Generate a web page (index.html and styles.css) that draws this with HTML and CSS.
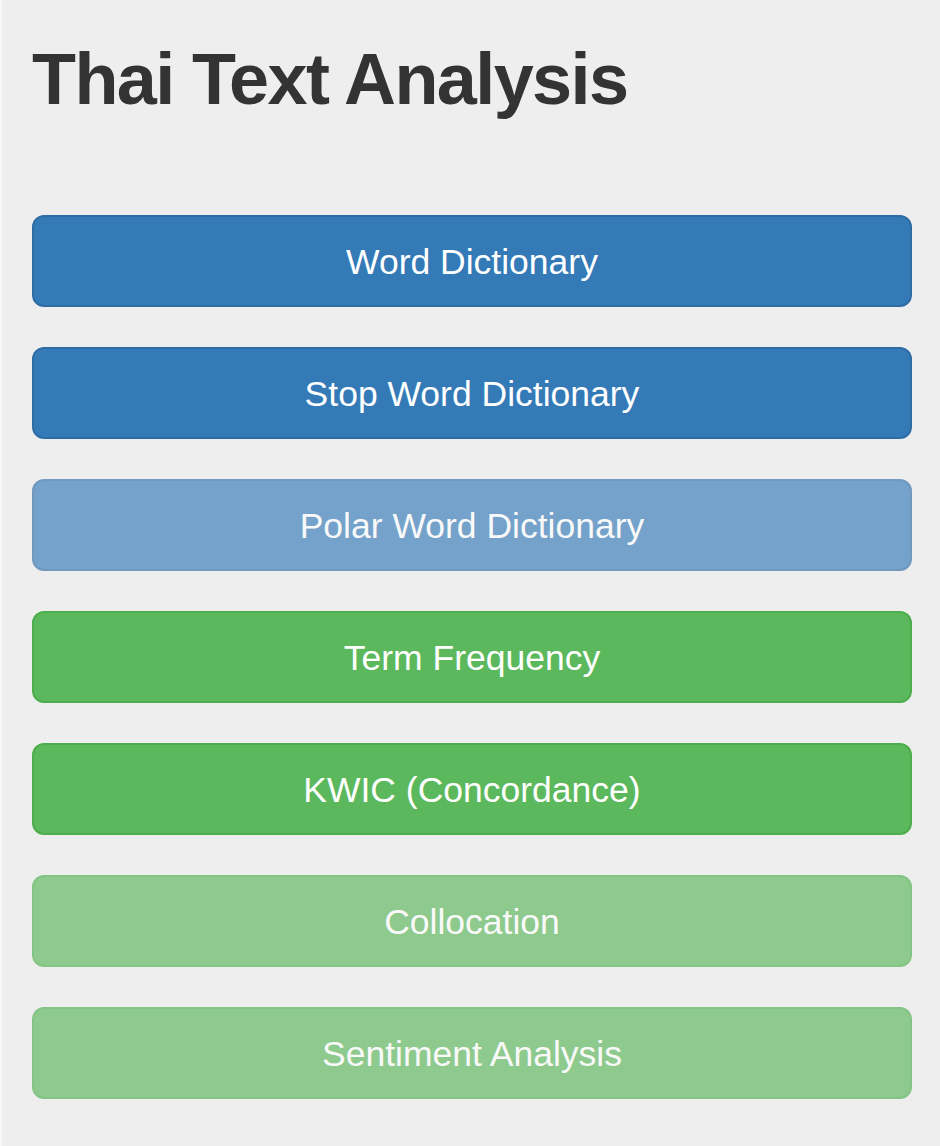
FILE: index.html
```html
<!DOCTYPE html>
<html lang="en">
<head>
<meta charset="utf-8">
<title>Thai Text Analysis</title>
<link rel="stylesheet" href="styles.css">
</head>
<body>
<div class="page">
  <h1 class="title">Thai Text Analysis</h1>
  <div class="menu">
    <a class="btn btn-primary">Word Dictionary</a>
    <a class="btn btn-primary">Stop Word Dictionary</a>
    <a class="btn btn-primary disabled">Polar Word Dictionary</a>
    <a class="btn btn-success">Term Frequency</a>
    <a class="btn btn-success">KWIC (Concordance)</a>
    <a class="btn btn-success disabled">Collocation</a>
    <a class="btn btn-success disabled">Sentiment Analysis</a>
  </div>
</div>
</body>
</html>
```

FILE: styles.css
```css
html, body {
  margin: 0;
  padding: 0;
  height: 100%;
}
body {
  background: #eeeeee;
  border-left: 2px solid #f6f6f6;
  font-family: "Liberation Sans", Arial, sans-serif;
  color: #333333;
}
.page {
  padding: 0 28px 0 30px;
}
.title {
  margin: 0;
  padding-top: 40px;
  font-size: 72px;
  line-height: 79px;
  font-weight: 700;
  letter-spacing: -1.6px;
  color: #333333;
  margin-bottom: 96px;
}
.menu {
  display: flex;
  flex-direction: column;
  gap: 40px;
}
.btn {
  display: block;
  box-sizing: border-box;
  height: 92px;
  padding: 21px 32px 19px;
  font-size: 35.5px;
  line-height: 48px;
  text-align: center;
  color: #ffffff;
  border: 2px solid transparent;
  border-radius: 12px;
}
.btn-primary {
  background: #337ab7;
  border-color: #2e6da4;
}
.btn-success {
  background: #5cb85c;
  border-color: #4cae4c;
}
.disabled {
  opacity: 0.65;
}
```
